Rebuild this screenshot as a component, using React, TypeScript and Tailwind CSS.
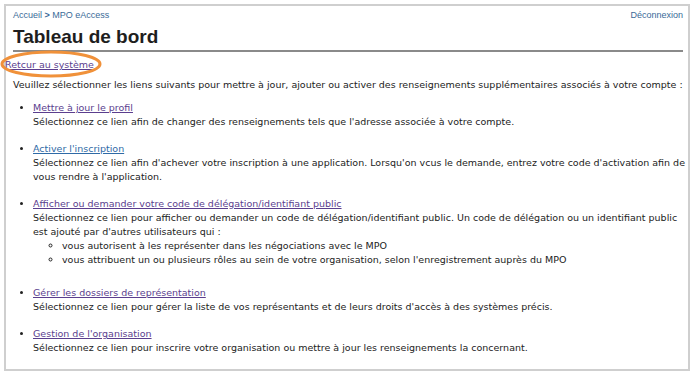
export default function App() {
  const font = { fontFamily: "Verdana, 'DejaVu Sans', sans-serif" };
  return (
    <div className="relative h-[377px] w-[700px] bg-white pt-1 pl-1 pr-[10px]" style={font}>
      <div className="h-[367px] border-2 border-[#cfcfcf] pl-[7px] pr-[2px] text-[#222]">
        <div className="flex justify-between pr-[3px] pt-[3px] text-[9px] leading-[12px] text-[#3a6a98]" style={{ fontFamily: "Verdana, 'Liberation Sans', sans-serif" }}>
          <div>
            Accueil <span className="font-bold">&gt;</span> MPO eAccess
          </div>
          <div>Déconnexion</div>
        </div>
        <h1
          className="mr-[3px] mt-[5px] border-b-2 border-[#8a8a8a] pb-[2px] text-[19px] font-bold leading-[22px] text-[#1e1e1e]"
          style={{ fontFamily: "'Liberation Sans', Arial, sans-serif" }}
        >
          Tableau de bord
        </h1>
        <a href="#" className="ml-[-8px] mt-[6px] block text-[9.5px] leading-[14px] text-[#5b3e8e] underline">
          Retcur au système
        </a>
        <p className="mt-[6px] text-[9.5px] leading-[14px]">
          Veuillez sélectionner les liens suivants pour mettre à jour, ajouter ou activer des renseignements supplémentaires associés à votre compte :
        </p>
        <ul className="mt-[9px] list-disc pl-[20px] text-[9.5px] leading-[14px]">
          <li className="mb-[13px]">
            <a href="#" className="text-[#5b3e8e] underline">Mettre à jour le profil</a>
            <br />
            Sélectionnez ce lien afin de changer des renseignements tels que l'adresse associée à votre compte.
          </li>
          <li className="mb-[13px]">
            <a href="#" className="text-[#2f6aa6] underline">Activer l'inscription</a>
            <br />
            Sélectionnez ce lien afin d'achever votre inscription à une application. Lorsqu'on vcus le demande, entrez votre code d'activation afin de vous rendre à l'application.
          </li>
          <li className="mb-[19px]">
            <a href="#" className="text-[#5b3e8e] underline">Afficher ou demander votre code de délégation/identifiant public</a>
            <br />
            Sélectionnez ce lien pour afficher ou demander un code de délégation/identifiant public. Un code de délégation ou un identifiant public est ajouté par d'autres utilisateurs qui :
            <ul className="list-[circle] pl-[29px]">
              <li>vous autorisent à les représenter dans les négociations avec le MPO</li>
              <li>vous attribuent un ou plusieurs rôles au sein de votre organisation, selon l'enregistrement auprès du MPO</li>
            </ul>
          </li>
          <li className="mb-[13px]">
            <a href="#" className="text-[#5b3e8e] underline">Gérer les dossiers de représentation</a>
            <br />
            Sélectionnez ce lien pour gérer la liste de vos représentants et de leurs droits d'accès à des systèmes précis.
          </li>
          <li>
            <a href="#" className="text-[#5b3e8e] underline">Gestion de l'organisation</a>
            <br />
            Sélectionnez ce lien pour inscrire votre organisation ou mettre à jour les renseignements la concernant.
          </li>
        </ul>
      </div>
      <svg className="pointer-events-none absolute left-0 top-[50px]" width="110" height="30" viewBox="0 0 110 30">
        <ellipse cx="51" cy="14" rx="49" ry="12" fill="none" stroke="#f0913a" strokeWidth="3" />
      </svg>
    </div>
  );
}
